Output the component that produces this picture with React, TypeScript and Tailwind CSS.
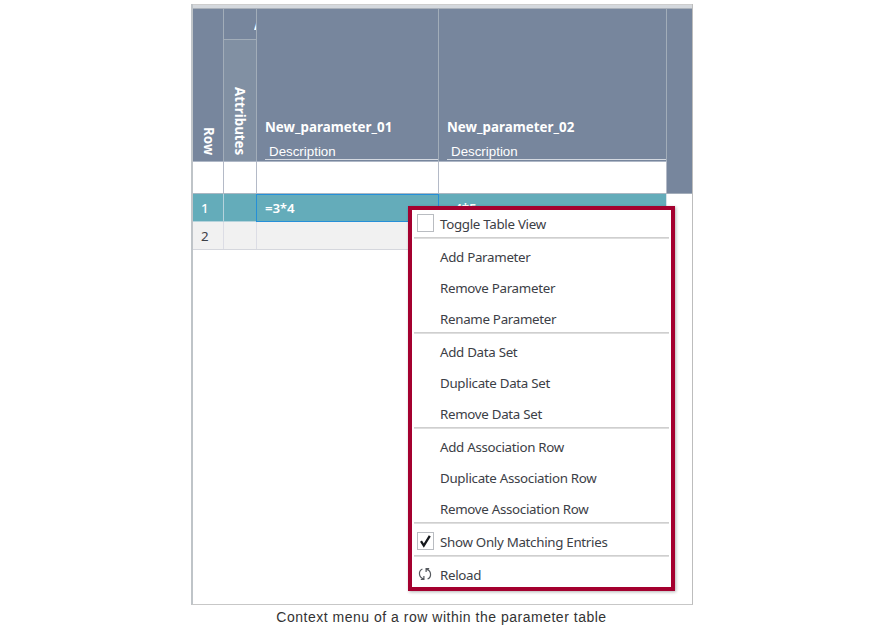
import React from "react";

const groups = [
  ["Add Parameter", "Remove Parameter", "Rename Parameter"],
  ["Add Data Set", "Duplicate Data Set", "Remove Data Set"],
  ["Add Association Row", "Duplicate Association Row", "Remove Association Row"],
];

function Item({ label, icon, first = false }: { label: string; icon?: React.ReactNode; first?: boolean }) {
  return (
    <div className={first ? "flex h-[27px] shrink-0 items-center pl-[5px]" : "flex h-[31px] shrink-0 items-center pl-[5px] pt-[4px]"}>
      <span className="mb-[2px] flex w-[23px] shrink-0">{icon}</span>
      <span className="whitespace-nowrap text-[13.33px] leading-[18px] tracking-[-0.3px]">{label}</span>
    </div>
  );
}

function Separator() {
  return <div className="mx-[2px] h-[2px] shrink-0 border-b border-[#dedede] bg-[#cfcfcf]" />;
}

function Checkbox({ checked = false }: { checked?: boolean }) {
  return (
    <span className="flex h-[18px] w-[17px] items-center justify-center border border-[#b9bcc1] bg-white">
      {checked && (
        <svg width="13" height="14" viewBox="0 0 13 14" fill="none">
          <path d="M2 7.2 4.8 11.6 10.8 1.8" stroke="#15181c" strokeWidth="2.3" />
        </svg>
      )}
    </span>
  );
}

function ReloadIcon() {
  return (
    <svg width="16" height="16" viewBox="0 0 16 16" fill="none" stroke="#55595e" strokeWidth="1.2">
      <path d="M5.4 3C1.3 4.8 1.2 11.4 6.8 12.9M6.9 10V13.3H3.8" />
      <path d="M10.6 13C14.7 11.2 14.8 4.6 9.2 3.1M9.1 6V2.7H12.2" />
    </svg>
  );
}

function ParameterHeader({ name, className }: { name: string; className: string }) {
  return (
    <div className={"flex shrink-0 flex-col justify-end border-r border-[#a2adb9] pl-2 " + className}>
      <div className="text-[13.33px] font-bold leading-[18px] tracking-[0.03px]">{name}</div>
      <div className="mt-[7px] h-[17px] border-b border-[#d4d9e1] pl-1 pt-px font-['Liberation_Sans',sans-serif] text-[13.33px] leading-[15px]">Description</div>
      <div className="h-px" />
    </div>
  );
}

export default function App() {
  return (
    <div className="h-[630px] w-[885px] overflow-hidden bg-white pl-[191px] pt-1 font-['Noto_Sans',sans-serif] text-[#3c4046]">
      <div className="relative h-[601px] w-[502px] border-b border-l-2 border-r border-b-[#c7c7c7] border-l-[#bfc4c8] border-r-[#bdbdbd]">
        <div className="h-[5px] border-b border-t border-b-[#aab1ba] border-t-[#cdcdcd] bg-[#d4d8dd]" />
        <div className="flex h-[185px]">
          <div className="flex w-[474px] flex-col">
            <div className="flex h-[152px] bg-[#77869d] text-white">
              <div className="flex w-[31px] items-end justify-center border-r border-[#a2adb9] pb-[6px] pl-[2px]">
                <span className="text-[13.33px] font-bold leading-[18px] [writing-mode:vertical-rl]">Row</span>
              </div>
              <div className="flex w-[33px] flex-col border-r border-[#a2adb9]">
                <div className="flex h-[31px] justify-end overflow-hidden border-b border-[#a2adb9] pt-[7px]">
                  <span className="w-[2px] overflow-hidden text-[13.33px] font-bold leading-[18px]">A</span>
                </div>
                <div className="flex flex-1 items-end justify-center bg-[#8190a3] pb-[6px]">
                  <span className="text-[13.33px] font-bold leading-[18px] [writing-mode:vertical-rl]">Attributes</span>
                </div>
              </div>
              <ParameterHeader name="New_parameter_01" className="w-[182px]" />
              <ParameterHeader name="New_parameter_02" className="w-[228px]" />
            </div>
            <div className="flex h-[33px] border-b border-t border-b-[#aab7c2] border-t-[#aeb7c6]">
              <div className="w-[31px] border-r border-[#b4bac7]" />
              <div className="w-[33px] border-r border-[#b4bac7]" />
              <div className="w-[182px] border-r border-[#b4bac7]" />
              <div className="w-[228px] border-r border-[#b4bac7]" />
            </div>
          </div>
          <div className="flex-1 border-b border-[#a3adba] bg-[#77869d]" />
        </div>
        <div className="flex h-7 w-[474px] bg-[#64acba] text-[13.33px] leading-[29px] text-white">
          <div className="w-[31px] border-b border-r border-[#b5d3dc] pl-2 font-medium">1</div>
          <div className="w-[33px] border-b border-r border-[#b5d3dc]" />
          <div className="-ml-px h-7 w-[183px] border border-[#258fd8] pl-2 font-semibold leading-[27px] tracking-[-0.2px]">=3*4</div>
          <div className="w-[228px] border-r border-[#d7e4eb] pl-2 font-semibold tracking-[-0.2px]">=4*5</div>
        </div>
        <div className="flex h-7 w-[474px] border-b border-[#d5d7dd] bg-[#f1f1f1] text-[13.33px] leading-[29px]">
          <div className="w-[31px] border-r border-[#dcdde5] pl-2">2</div>
          <div className="w-[33px] border-r border-[#dcdde5]" />
          <div className="flex-1" />
        </div>
        <div className="absolute left-[215px] top-[202px] flex h-[385px] w-[267px] flex-col border-4 border-[#a4002f] bg-white shadow-[1px_1px_3px_rgba(0,0,0,.3)]">
          <Item label="Toggle Table View" icon={<Checkbox />} first />
          <Separator />
          {groups.map((group) => (
            <React.Fragment key={group[0]}>
              {group.map((label) => <Item key={label} label={label} />)}
              <Separator />
            </React.Fragment>
          ))}
          <Item label="Show Only Matching Entries" icon={<Checkbox checked />} />
          <Separator />
          <Item label="Reload" icon={<ReloadIcon />} />
        </div>
      </div>
      <div className="w-[501px] pt-[2px] text-center font-['Liberation_Sans',sans-serif] text-[14px] leading-5 tracking-[0.51px] text-[#333]">
        Context menu of a row within the parameter table
      </div>
    </div>
  );
}
